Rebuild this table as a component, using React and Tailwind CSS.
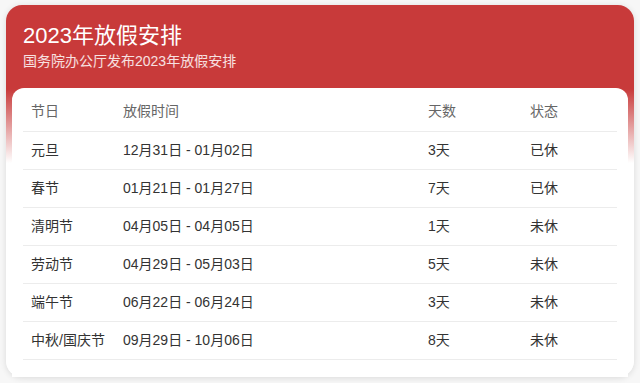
const holidays = [
  { name: "元旦", range: "12月31日 - 01月02日", days: "3天", status: "已休" },
  { name: "春节", range: "01月21日 - 01月27日", days: "7天", status: "已休" },
  { name: "清明节", range: "04月05日 - 04月05日", days: "1天", status: "未休" },
  { name: "劳动节", range: "04月29日 - 05月03日", days: "5天", status: "未休" },
  { name: "端午节", range: "06月22日 - 06月24日", days: "3天", status: "未休" },
  { name: "中秋/国庆节", range: "09月29日 - 10月06日", days: "8天", status: "未休" },
];

export default function App() {
  return (
    <div
      className="w-[640px] h-[383px] bg-[#f7f7f7] pt-[5px] px-[6px]"
      style={{ fontFamily: '"Liberation Sans", "Noto Sans CJK SC", sans-serif' }}
    >
      {/* Card */}
      <div className="h-[372px] rounded-[16px] shadow-[0_1px_6px_rgba(0,0,0,0.12)] bg-[linear-gradient(to_bottom,#c83a3a_0px,#c83a3a_84px,#ffffff_158px)] flex flex-col">
        <div className="px-[17px] pt-[17px] h-[83px]">
          <h1 className="text-[22px] leading-[28px] text-white">2023年放假安排</h1>
          <p className="text-[14px] leading-[20px] text-white/85 mt-[1px]">国务院办公厅发布2023年放假安排</p>
        </div>

        {/* Inner card */}
        <div className="mx-[6px] flex-1 bg-white rounded-t-[12px] pt-[5px] px-[11px]">
          <table className="w-full table-fixed border-collapse text-[14px]">
            <thead>
              <tr className="h-[38px] border-b border-[#ececec] text-left text-[#666]">
                <th className="w-[92px] pl-[8px] font-normal">节日</th>
                <th className="w-[305px] pl-[8px] font-normal">放假时间</th>
                <th className="w-[102px] pl-[8px] font-normal">天数</th>
                <th className="pl-[8px] font-normal">状态</th>
              </tr>
            </thead>
            <tbody className="text-[#333]">
              {holidays.map((h) => (
                <tr key={h.name} className="h-[38px] border-b border-[#ececec]">
                  <td className="pl-[8px] whitespace-nowrap">{h.name}</td>
                  <td className="pl-[8px]">{h.range}</td>
                  <td className="pl-[8px]">{h.days}</td>
                  <td className="pl-[8px]">{h.status}</td>
                </tr>
              ))}
            </tbody>
          </table>
        </div>
      </div>
    </div>
  );
}
